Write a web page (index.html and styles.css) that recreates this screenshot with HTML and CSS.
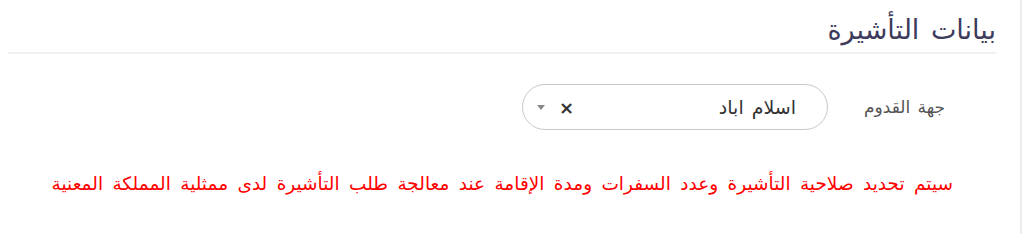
FILE: index.html
```html
<!DOCTYPE html>
<html lang="ar" dir="rtl">
<head>
    <meta charset="UTF-8">
    <title>بيانات التأشيرة</title>
    <link rel="stylesheet" href="styles.css">
</head>
<body>
    <div class="panel">
        <div class="panel-header">
            <h2 class="panel-title">بيانات التأشيرة</h2>
        </div>
        <div class="form-row">
            <label class="field-label">جهة القدوم</label>
            <div class="select-box">
                <span class="select-value">اسلام اباد</span>
                <span class="select-clear">×</span>
                <span class="select-arrow"></span>
            </div>
        </div>
        <p class="notice">سيتم تحديد صلاحية التأشيرة وعدد السفرات ومدة الإقامة عند معالجة طلب التأشيرة لدى ممثلية المملكة المعنية</p>
    </div>
</body>
</html>
```

FILE: styles.css
```css
body {
    margin: 0;
    padding: 0 2px 0 8px;
    background: #fff;
    font-family: "DejaVu Sans", "Noto Sans", sans-serif;
}
.panel {
    border-right: 2px solid #ececec;
    min-height: 234px;
    box-sizing: border-box;
    padding-right: 24px;
    direction: rtl;
}
.panel-header {
    border-bottom: 2px solid #f0f0f0;
    padding: 14px 0 7px 0;
}
.panel-title {
    margin: 0;
    font-size: 27px;
    font-weight: normal;
    word-spacing: 3px;
    color: #3d3b5c;
}
.form-row {
    display: flex;
    align-items: center;
    padding-top: 30px;
    padding-right: 51px;
}
.field-label {
    font-size: 17px;
    word-spacing: 2px;
    color: #555;
    width: 117px;
}
.select-box {
    display: flex;
    align-items: center;
    width: 306px;
    height: 46px;
    box-sizing: border-box;
    border: 1px solid #c8c8c8;
    border-radius: 23px;
    padding: 0 31px 0 14px;
}
.select-value {
    flex: 1;
    font-size: 19px;
    word-spacing: 2px;
    color: #333;
}
.select-clear {
    font-size: 18px;
    font-weight: bold;
    color: #333;
    margin-left: 14px;
}
.select-arrow {
    width: 0;
    height: 0;
    border-left: 4px solid transparent;
    border-right: 4px solid transparent;
    border-top: 5px solid #888;
}
.notice {
    margin: 43px 43px 0 0;
    font-size: 18.5px;
    word-spacing: 3.5px;
    color: #f00;
}
```
